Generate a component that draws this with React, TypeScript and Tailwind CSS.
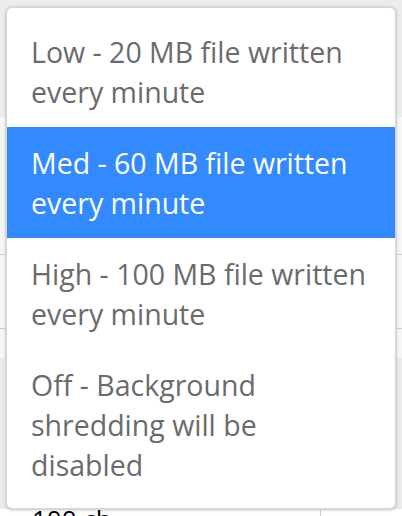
const options = [
  { label: "Low - 20 MB file written every minute", active: false },
  { label: "Med - 60 MB file written every minute", active: true },
  { label: "High - 100 MB file written every minute", active: false },
  { label: "Off - Background shredding will be disabled", active: false },
];

const App = () => {
  return (
    <div className="relative w-[402px] h-[516px] overflow-hidden bg-[#f6f6f6] font-['Open_Sans',sans-serif]">
      {/* page behind the menu */}
      <div className="flex flex-col">
        <div className="h-[117px] bg-[#ececec]"></div>
        <div className="h-[138px] border-b border-[#cfcfcf]"></div>
        <div className="h-[74px] border-b border-[#cfcfcf]"></div>
        <div className="h-[29px]"></div>
        <div className="h-[151px] bg-[#ebebeb]"></div>
        <div className="flex h-[40px] bg-white">
          <div className="w-[321px] border-r border-[#cfcfcf] pl-8 text-[26px] leading-[20px] text-black">
            100 ch
          </div>
        </div>
      </div>

      {/* dropdown menu */}
      <div className="absolute left-[5px] top-[6px] w-[392px] rounded-[7px] border-2 border-[#d6d6d6] bg-white py-2 shadow-sm">
        {options.map((o) => (
          <div
            key={o.label}
            className={
              o.active
                ? "bg-[#338aff] pl-6 pr-6 py-[15.5px] text-[28.5px] leading-[40px] text-white"
                : "pl-6 pr-6 py-[15.5px] text-[28.5px] leading-[40px] text-[#6b6b6b]"
            }
          >
            {o.label}
          </div>
        ))}
      </div>
    </div>
  );
};

export default App;
